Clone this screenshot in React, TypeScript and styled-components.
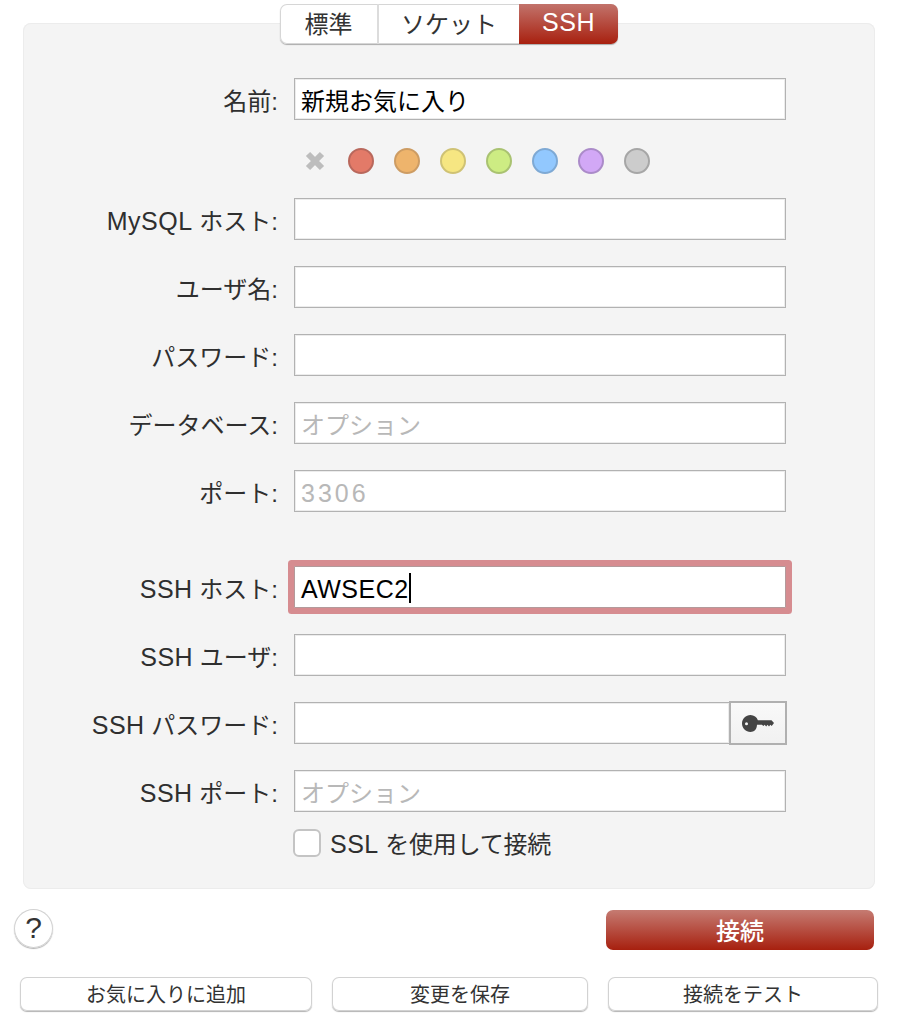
import React, { FC, ReactNode } from 'react';
import styled, { createGlobalStyle } from 'styled-components';

const GlobalStyle = createGlobalStyle`
  html, body {
    margin: 0;
    padding: 0;
    background: #fff;
  }
  body {
    font-family: "Liberation Sans", "Noto Sans CJK JP", sans-serif;
    color: #2b2b2b;
  }
`;

const Page = styled.div`
  width: 910px;
  height: 1036px;
  overflow: hidden;
  padding-top: 4px;
  box-sizing: border-box;
`;

const Tabs = styled.div`
  position: relative;
  z-index: 1;
  display: flex;
  width: 338px;
  height: 40px;
  margin: 0 0 -21px 280px;
  border-radius: 7px;
  background: #fff;
  box-shadow: inset 0 0 0 1px #d6d6d6, 0 1px 1px rgba(0, 0, 0, 0.3);
`;

const Tab = styled.div<{ $width: number; $active?: boolean; $divider?: boolean }>`
  width: ${(p) => p.$width}px;
  box-sizing: border-box;
  display: flex;
  align-items: center;
  justify-content: center;
  padding-bottom: 3px;
  font-size: 24px;
  color: ${(p) => (p.$active ? '#fff' : '#333')};
  border-radius: ${(p) => (p.$active ? '0 7px 7px 0' : '0')};
  background: ${(p) => (p.$active ? 'linear-gradient(#c2736b, #a8200f)' : 'transparent')};
  border-left: ${(p) => (p.$divider ? '2px solid #dcdcdc' : 'none')};
`;

const Latin = styled.span<{ $spacing?: number }>`
  font-size: 25px;
  letter-spacing: ${(p) => p.$spacing ?? 0.5}px;
`;

const Panel = styled.div`
  width: 852px;
  height: 866px;
  box-sizing: border-box;
  margin-left: 23px;
  padding: 55px 0 0 0;
  background: #f4f4f4;
  border-radius: 8px;
  box-shadow: inset 0 0 0 1px #ececec;
  display: flex;
  flex-direction: column;
  gap: 26px;
`;

const Row = styled.div<{ $extraTop?: number }>`
  display: flex;
  align-items: center;
  height: 42px;
  margin-top: ${(p) => p.$extraTop ?? 0}px;
`;

const Label = styled.div`
  width: 255px;
  flex: none;
  text-align: right;
  font-size: 24px;
  color: #2f2f2f;
  white-space: nowrap;
`;

const Field = styled.div<{ $focused?: boolean; $width?: number; $placeholder?: boolean; $latin?: boolean }>`
  position: relative;
  width: ${(p) => p.$width ?? 492}px;
  height: 42px;
  margin-left: 16px;
  flex: none;
  box-sizing: border-box;
  display: flex;
  align-items: center;
  padding: ${(p) => (p.$latin ? '5px' : '0')} 0 0 6px;
  background: #fff;
  border: 1px solid ${(p) => (p.$focused ? '#b39a9b' : '#b2b2b2')};
  font-size: 24px;
  color: ${(p) => (p.$placeholder ? '#b8b8b8' : '#000')};
  box-shadow: ${(p) => (p.$focused ? '0 0 0 6px #d68c90' : 'inset 0 0 0 1px #ececec')};
  border-radius: ${(p) => (p.$focused ? '1px' : '0')};
`;

const Caret = styled.span`
  display: inline-block;
  width: 2px;
  height: 30px;
  margin-top: -3px;
  background: #000;
`;

const KeyButton = styled.div`
  width: 58px;
  height: 44px;
  flex: none;
  margin-left: -1px;
  box-sizing: border-box;
  border: 2px solid #b0b0b0;
  background: linear-gradient(#f9f9f9, #f1f1f1);
  display: flex;
  align-items: center;
  justify-content: center;
`;

const ColorRow = styled.div`
  display: flex;
  align-items: center;
  height: 26px;
  padding: 4px 0 0 282px;
  box-sizing: border-box;
`;

const Clear = styled.svg`
  width: 20px;
  height: 20px;
  margin-right: 23px;
  flex: none;
`;

const Swatch = styled.div<{ $fill: string; $edge: string }>`
  width: 26px;
  height: 26px;
  flex: none;
  box-sizing: border-box;
  border-radius: 50%;
  margin-right: 20px;
  background: ${(p) => p.$fill};
  border: 2px solid ${(p) => p.$edge};
`;

const CheckRow = styled.div`
  display: flex;
  align-items: center;
  gap: 9px;
  height: 28px;
  margin: -9px 0 0 270px;
  font-size: 24px;
  color: #2f2f2f;
`;

const Checkbox = styled.div`
  width: 28px;
  height: 28px;
  box-sizing: border-box;
  flex: none;
  background: #fff;
  border: 2px solid #c4c4c4;
  border-radius: 6px;
`;

const CheckText = styled.span`
  margin-top: -2px;
  letter-spacing: -0.2px;
`;

const Actions = styled.div`
  display: flex;
  align-items: center;
  height: 40px;
  margin-top: 19px;
  padding-left: 14px;
`;

const Help = styled.div`
  width: 39px;
  height: 39px;
  box-sizing: border-box;
  border-radius: 50%;
  background: #fff;
  display: flex;
  align-items: center;
  justify-content: center;
  font-size: 30px;
  color: #333;
  box-shadow: inset 0 0 0 1px #d2d2d2, 0 1px 1px rgba(0, 0, 0, 0.3);
`;

const Connect = styled.div`
  width: 268px;
  height: 40px;
  margin-left: 553px;
  margin-top: 4px;
  padding-bottom: 2px;
  box-sizing: border-box;
  border-radius: 7px;
  background: linear-gradient(#c57b72, #a7200f);
  color: #fff;
  font-size: 24px;
  font-weight: 500;
  display: flex;
  align-items: center;
  justify-content: center;
`;

const Footer = styled.div`
  display: flex;
  margin-top: 29px;
  padding-left: 20px;
`;

const FooterButton = styled.div<{ $width: number; $gap?: number }>`
  width: ${(p) => p.$width}px;
  height: 34px;
  margin-left: ${(p) => p.$gap ?? 0}px;
  padding-bottom: 1px;
  box-sizing: border-box;
  border-radius: 7px;
  background: #fff;
  display: flex;
  align-items: center;
  justify-content: center;
  font-size: 20px;
  color: #333;
  box-shadow: inset 0 0 0 1px #d2d2d2, 0 1px 1px rgba(0, 0, 0, 0.3);
`;

const colors = [
  { fill: '#e37a68', edge: '#b9685c' },
  { fill: '#eeb46c', edge: '#cd9c63' },
  { fill: '#f6e682', edge: '#cfc274' },
  { fill: '#cdec83', edge: '#a9c271' },
  { fill: '#92c8fe', edge: '#7ea9d4' },
  { fill: '#d2a8f6', edge: '#ab8bc9' },
  { fill: '#cccccc', edge: '#a6a6a6' },
];

interface FormRowProps {
  label: ReactNode;
  value?: ReactNode;
  placeholder?: ReactNode;
  extraTop?: number;
  focused?: boolean;
  latin?: boolean;
  width?: number;
  children?: ReactNode;
}

const FormRow: FC<FormRowProps> = ({ label, value, placeholder, extraTop, focused, latin, width, children }) => (
  <Row $extraTop={extraTop}>
    <Label>{label}</Label>
    <Field $focused={focused} $width={width} $placeholder={!value} $latin={latin}>
      {value || placeholder}
      {focused && <Caret />}
    </Field>
    {children}
  </Row>
);

const KeyIcon = () => (
  <svg width="32" height="17" viewBox="0 0 32 17">
    <path
      fill="#444"
      fillRule="evenodd"
      d="M8.500 0c3.500 0 6.300 2.100 7.400 5.200H29.500L32 8l-2.300 3-1.300-1.200-1.400 1.800-1.500-1.800-1.300 1.800-1.600-1.800-1.200 1.300-1.500-1.300h-4.900C14.800 14.900 12 17 8.500 17 3.800 17 0 13.200 0 8.500S3.800 0 8.500 0zM4.500 7.300a1.500 1.500 0 1 0 0 3 1.500 1.500 0 0 0 0-3z"
    />
  </svg>
);

const App: FC = () => (
  <Page>
    <GlobalStyle />
    <Tabs>
      <Tab $width={97}>標準</Tab>
      <Tab $width={142} $divider>ソケット</Tab>
      <Tab $width={99} $active><Latin>SSH</Latin></Tab>
    </Tabs>
    <Panel>
      <FormRow label="名前:" value="新規お気に入り" />
      <ColorRow>
        <Clear viewBox="0 0 20 20">
          <path d="M3 3l14 14M17 3L3 17" stroke="#bdbdbd" strokeWidth="6" />
        </Clear>
        {colors.map((c) => (
          <Swatch key={c.fill} $fill={c.fill} $edge={c.edge} />
        ))}
      </ColorRow>
      <FormRow label={<><Latin>MySQL</Latin> ホスト:</>} />
      <FormRow label="ユーザ名:" />
      <FormRow label="パスワード:" />
      <FormRow label="データベース:" placeholder="オプション" />
      <FormRow label="ポート:" placeholder={<Latin $spacing={3}>3306</Latin>} latin />
      <FormRow label={<><Latin>SSH</Latin> ホスト:</>} value={<Latin>AWSEC2</Latin>} extraTop={28} focused latin />
      <FormRow label={<><Latin>SSH</Latin> ユーザ:</>} />
      <FormRow label={<><Latin>SSH</Latin> パスワード:</>} width={436}>
        <KeyButton>
          <KeyIcon />
        </KeyButton>
      </FormRow>
      <FormRow label={<><Latin>SSH</Latin> ポート:</>} placeholder="オプション" />
      <CheckRow>
        <Checkbox />
        <CheckText><Latin>SSL</Latin> を使用して接続</CheckText>
      </CheckRow>
    </Panel>
    <Actions>
      <Help>?</Help>
      <Connect>接続</Connect>
    </Actions>
    <Footer>
      <FooterButton $width={292}>お気に入りに追加</FooterButton>
      <FooterButton $width={256} $gap={20}>変更を保存</FooterButton>
      <FooterButton $width={270} $gap={20}>接続をテスト</FooterButton>
    </Footer>
  </Page>
);

export default App;
